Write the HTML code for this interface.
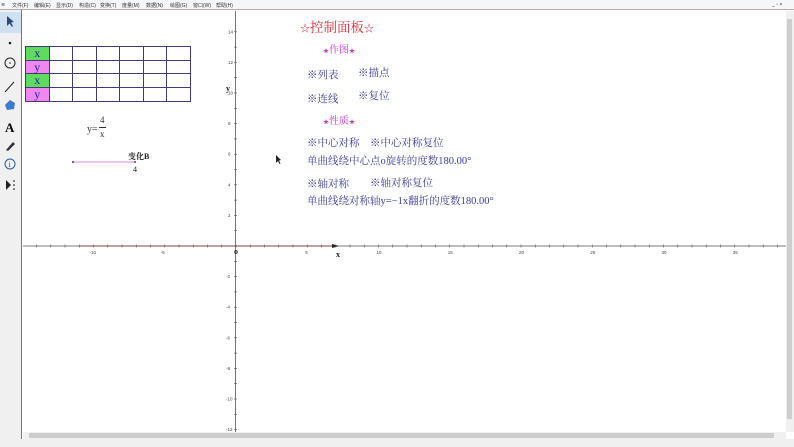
<!DOCTYPE html>
<html><head><meta charset="utf-8">
<style>
*{margin:0;padding:0;box-sizing:border-box}
body{width:794px;height:447px;overflow:hidden;background:#fff;font-family:"Liberation Serif","Noto Serif CJK SC",serif;position:relative}
.menu{position:absolute;left:0;top:0;width:794px;height:10px;background:#f4f6f8;border-bottom:1px solid #b8a8a8;font:5px "Liberation Sans","Noto Sans CJK SC",sans-serif;color:#333;white-space:nowrap}
.menu span{position:absolute;top:2px}
.tb{position:absolute;left:0;top:10px;width:22px;height:429px;background:#f0f0f0;border-right:1px solid #777}
.sel{position:absolute;left:0;top:2px;width:21px;height:21px;background:#cfe0f2}
.vs{position:absolute;left:786px;top:11px;width:8px;height:421px;background:#f0f0f0}
.vs div{position:absolute;left:1px;top:8px;width:5px;height:400px;background:#cdcdcd}
.hs{position:absolute;left:23px;top:432px;width:763px;height:7px;background:#f0f0f0}
.hs div{position:absolute;left:6px;top:1px;width:745px;height:5px;background:#cdcdcd}
.st{position:absolute;left:0;top:439px;width:794px;height:8px;background:#f0f0f0}
.t{position:absolute;white-space:nowrap;color:#3a3aa0;font-size:10.5px}
table{position:absolute;left:25px;top:46px;border-collapse:collapse}
td{border:1px solid #443a7a;width:23.5px;height:13.7px;font-size:12px;text-align:center;line-height:11px;color:#2020a0}
</style></head><body>
<div class="menu">
<span style="left:1px">≋</span><span style="left:12px">文件(F)</span><span style="left:34px">编辑(E)</span><span style="left:56px">显示(D)</span><span style="left:79px">构造(C)</span><span style="left:100px">变换(T)</span><span style="left:122px">度量(M)</span><span style="left:146px">数据(N)</span><span style="left:170px">绘图(G)</span><span style="left:193px">窗口(W)</span><span style="left:216px">帮助(H)</span>
<span style="left:772px">_ ▫ ×</span>
</div>
<div class="tb"><div class="sel"></div>
<svg width="22" height="429" style="position:absolute;left:0;top:0">
<path d="M7 6 L7 16 L9.5 13.5 L12 17 L13 16 L11 12.5 L14 12 Z" fill="#2a4a7a"/>
<circle cx="10" cy="33" r="1.3" fill="#222"/>
<circle cx="10" cy="53" r="5" fill="none" stroke="#222" stroke-width="1"/><circle cx="10" cy="53" r=".8" fill="#222"/>
<line x1="5" y1="82" x2="14" y2="72" stroke="#222"/>
<path d="M5 95 L10 90 L15 93 L14 99 L7 100 Z" fill="#3a7ad0"/>
<text x="5" y="122" font-size="13" font-weight="bold" font-family="Liberation Serif">A</text>
<path d="M6 140 L13 132 L15 134 L8 141 Z" fill="#333"/>
<circle cx="10" cy="154" r="5" fill="none" stroke="#2a5a9a"/><text x="8.5" y="157" font-size="8" fill="#2a5a9a">i</text>
<path d="M6 170 L11 175 L6 180 Z" fill="#222"/><circle cx="14" cy="171" r=".8"/><circle cx="14" cy="175" r=".8"/><circle cx="14" cy="179" r=".8"/>
</svg></div>

<svg id="ax" width="794" height="447" style="position:absolute;left:0;top:0">
<line x1="23" y1="246" x2="786" y2="246" stroke="#555" stroke-width="0.8"/>
<line x1="235.5" y1="11" x2="235.5" y2="432" stroke="#555" stroke-width="0.8"/>
<line x1="79" y1="246" x2="338" y2="246" stroke="#8a2a2a" stroke-width="0.8"/>
<path d="M332 244 L339 246 L332 248 Z" fill="#222"/>
<line x1="73" y1="162" x2="135" y2="162" stroke="#cc66cc" stroke-width="0.8"/>
<circle cx="73" cy="162" r="1" fill="#444"/><circle cx="135" cy="162" r="1" fill="#444"/>
<g id="tk" stroke="#555" stroke-width="0.6"></g>
<g id="lb" font-size="4.5" fill="#444" font-family="Liberation Sans"></g>
<text x="234" y="254" font-size="8" font-weight="bold" fill="#222">o</text>
<text x="336" y="257" font-size="8" font-weight="bold" fill="#222">x</text>
<text x="226" y="91" font-size="8" font-weight="bold" fill="#222">y</text>
<path d="M276 155 L276 163 L278 161 L279.5 164 L280.5 163.5 L279 160.5 L281 160 Z" fill="#222"/>
</svg>
<script>
var tk=document.getElementById('tk'),lb=document.getElementById('lb'),s='',l='';
for(var i=-15;i<=38;i++){var x=236+i*14.25;if(x<24||x>785)continue;s+='<line x1="'+x+'" y1="244.5" x2="'+x+'" y2="247.5"/>';if(i%5==0&&i!=0)l+='<text x="'+(x-(i<0?4:2))+'" y="254">'+i+'</text>';}
for(var j=-12;j<=14;j++){var y=246-j*15.3;if(j==0)continue;s+='<line x1="234" y1="'+y+'" x2="237" y2="'+y+'"/>';if(j%2==0)l+='<text x="'+(j<0?226:228)+'" y="'+(y+1.5)+'">'+j+'</text>';}
tk.innerHTML=s;lb.innerHTML=l;
</script>

<table>
<tr><td style="background:#5fdc5f">x</td><td></td><td></td><td></td><td></td><td></td><td></td></tr>
<tr><td style="background:#ee88ee">y</td><td></td><td></td><td></td><td></td><td></td><td></td></tr>
<tr><td style="background:#5fdc5f">x</td><td></td><td></td><td></td><td></td><td></td><td></td></tr>
<tr><td style="background:#ee88ee">y</td><td></td><td></td><td></td><td></td><td></td><td></td></tr>
</table>

<div class="t" style="left:87px;top:124px;color:#333;font-size:10px">y=</div>
<div class="t" style="left:100px;top:115px;color:#333;font-size:9px">4</div>
<div style="position:absolute;left:99px;top:127px;width:7px;height:1px;background:#333"></div>
<div class="t" style="left:100px;top:129px;color:#333;font-size:9px">x</div>
<div class="t" style="left:128px;top:151px;color:#222;font-size:8px;font-weight:bold">变化B</div>
<div class="t" style="left:133px;top:165px;color:#222;font-size:8px">4</div>

<div class="t" style="left:300px;top:16px;color:#dd2a3a;font-size:13.5px"><span style="font-size:10px">☆</span>控制面板<span style="font-size:10px">☆</span></div>
<div class="t" style="left:323px;top:41px;color:#cc33cc;font-size:10px"><span style="font-size:6px">★</span>作图<span style="font-size:6px">★</span></div>
<div class="t" style="left:307px;top:67px">※列表</div>
<div class="t" style="left:358px;top:65px">※描点</div>
<div class="t" style="left:307px;top:91px">※连线</div>
<div class="t" style="left:358px;top:88px">※复位</div>
<div class="t" style="left:323px;top:112px;color:#cc33cc;font-size:10px"><span style="font-size:6px">★</span>性质<span style="font-size:6px">★</span></div>
<div class="t" style="left:307px;top:135px">※中心对称</div>
<div class="t" style="left:370px;top:135px">※中心对称复位</div>
<div class="t" style="left:307px;top:153px">单曲线绕中心点o旋转的度数180.00°</div>
<div class="t" style="left:307px;top:176px">※轴对称</div>
<div class="t" style="left:370px;top:175px">※轴对称复位</div>
<div class="t" style="left:307px;top:193px">单曲线绕对称轴y=−1x翻折的度数180.00°</div>

<div class="vs"><div></div></div>
<div class="hs"><div></div></div>
<div class="st"></div>
</body></html>
